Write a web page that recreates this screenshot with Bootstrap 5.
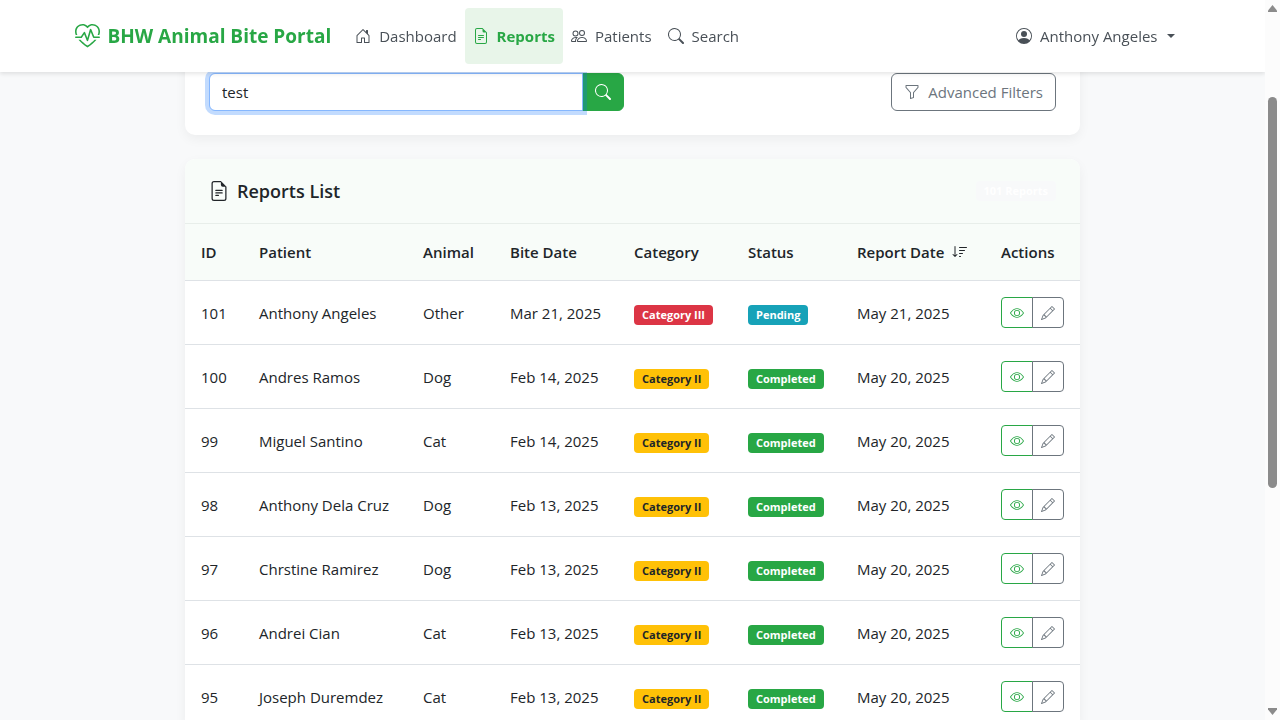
<!DOCTYPE html>
<html lang="en">
<head>
<meta charset="utf-8">
<meta name="viewport" content="width=device-width, initial-scale=1">
<title>Reports - BHW Animal Bite Portal</title>
<link href="https://cdn.jsdelivr.net/npm/bootstrap@5.3.0/dist/css/bootstrap.min.css" rel="stylesheet">
<style>
:root { --brand: #28a745; --gutter: 15px; }
body { font-family: "Open Sans", "Noto Sans", sans-serif; font-size: 15px; line-height: 24px; background: #f8f9fa; color: #212529; }
.ico { width: 16px; height: 16px; fill: currentColor; flex: none; }
.ico-brand { width: 25px; height: 25px; }
.ico-title { width: 20px; height: 20px; }
.ico-action { width: 14px; height: 14px; display: block; }
.viewport { height: 100vh; overflow: hidden; padding-right: var(--gutter); }
.topbar { right: var(--gutter); padding: 8px 0; background: #fff; box-shadow: 0 2px 4px rgba(0,0,0,.1); }
.brand-link { color: var(--brand) !important; font-size: 19px; font-weight: 700; line-height: 30px; margin-right: 16px; }
.topbar .nav-link { color: #495057; padding: 16px 8px; border-radius: 4px; display: flex; align-items: center; gap: 8px; }
.topbar .nav-link.active { color: var(--brand); background: #e8f5e9; font-weight: 700; }
.topbar .dropdown-toggle::after { margin-left: 1px; }
.page-col { max-width: 919px; padding: 49px 12px 0; }
.panel { border: 0; border-radius: 10px; box-shadow: 0 4px 12px rgba(0,0,0,.05); overflow: hidden; margin-bottom: 24px; }
.search-box { width: 415px; }
.search-box .form-control { height: 38px; font-size: 15px; border-color: #86b7fe; box-shadow: 0 0 0 4px rgba(13,110,253,.25); z-index: 5; }
.search-box .btn { background: var(--brand); color: #fff; border-color: var(--brand); }
.filter-btn { font-size: 15px; height: 38px; }
.panel-head { background: #f8fcf9; border-bottom: 1px solid #e8eeea; padding: 20px 24px; }
.panel-title { font-size: 18px; line-height: 24px; font-weight: 600; }
.count-badge { background: #f8f9fa; color: #fff; }
.badge { font-size: 11px; line-height: 12px; padding: 4px 8px; border-radius: 4px; }
.reports { table-layout: fixed; --bs-table-bg: transparent; }
.reports > :not(caption) > * > * { padding: 16px; white-space: nowrap; border-color: #dee2e6; }
.reports thead th { background: #f8fcf9; font-weight: 600; }
.c-id { width: 58px; } .c-patient { width: 164px; } .c-animal { width: 87px; } .c-bite { width: 124px; }
.c-cat { width: 114px; } .c-status { width: 109px; } .c-report { width: 144px; } .c-actions { width: 95px; }
.tag-red { background: #dc3545; } .tag-amber { background: #ffc107; color: #212529; }
.tag-teal { background: #17a2b8; } .tag-green { background: var(--brand); }
.btn-group-sm > .btn { padding: 8px; height: 31px; width: 32px; display: flex; justify-content: center; align-items: center; }
.btn-view { color: var(--brand); border-color: var(--brand); }
.scroll-rail { position: fixed; top: 0; right: 0; bottom: 0; width: var(--gutter); background: #fcfcfc; z-index: 1040; padding: 5px 3px; }
.scroll-thumb { width: 9px; border-radius: 5px; background: #8b8b8b; height: 55%; margin-top: 85px; }
.rail-arrow { width: 9px; height: 7px; fill: #8b8b8b; display: block; }
</style>
</head>
<body>
<svg class="d-none" aria-hidden="true">
<symbol id="pulse" viewBox="0 0 16 16"><path d="m8 2.748-.717-.737C5.6.281 2.514.878 1.4 3.053.918 3.995.78 5.323 1.508 7H.43c-2.128-5.697 4.165-8.83 7.394-5.857q.09.083.176.171a3 3 0 0 1 .176-.17c3.23-2.974 9.522.159 7.394 5.856h-1.078c.728-1.677.59-3.005.108-3.947C13.486.878 10.4.28 8.717 2.01zM2.212 10h1.315C4.593 11.183 6.05 12.458 8 13.795c1.949-1.337 3.407-2.612 4.473-3.795h1.315c-1.265 1.566-3.14 3.25-5.788 5-2.648-1.75-4.523-3.434-5.788-5"/><path d="M10.464 3.314a.5.5 0 0 0-.945.049L7.921 8.956 6.464 5.314a.5.5 0 0 0-.88-.091L3.732 8H.5a.5.5 0 0 0 0 1H4a.5.5 0 0 0 .416-.223l1.473-2.209 1.647 4.118a.5.5 0 0 0 .945-.049l1.598-5.593 1.457 3.642A.5.5 0 0 0 12 9h3.5a.5.5 0 0 0 0-1h-3.162z"/></symbol>
<symbol id="house" viewBox="0 0 16 16"><path d="M8.354 1.146a.5.5 0 0 0-.708 0l-6 6A.5.5 0 0 0 1.5 7.5v7a.5.5 0 0 0 .5.5h4.5a.5.5 0 0 0 .5-.5v-4h2v4a.5.5 0 0 0 .5.5H14a.5.5 0 0 0 .5-.5v-7a.5.5 0 0 0-.146-.354L13 5.793V2.5a.5.5 0 0 0-.5-.5h-1a.5.5 0 0 0-.5.5v1.293zM2.5 14V7.707l5.5-5.5 5.5 5.5V14H10v-4a.5.5 0 0 0-.5-.5h-3a.5.5 0 0 0-.5.5v4z"/></symbol>
<symbol id="file" viewBox="0 0 16 16"><path d="M5.5 7a.5.5 0 0 0 0 1h5a.5.5 0 0 0 0-1zM5 9.5a.5.5 0 0 1 .5-.5h5a.5.5 0 0 1 0 1h-5a.5.5 0 0 1-.5-.5m0 2a.5.5 0 0 1 .5-.5h2a.5.5 0 0 1 0 1h-2a.5.5 0 0 1-.5-.5"/><path d="M9.5 0H4a2 2 0 0 0-2 2v12a2 2 0 0 0 2 2h8a2 2 0 0 0 2-2V4.5zm0 1v2A1.5 1.5 0 0 0 11 4.5h2V14a1 1 0 0 1-1 1H4a1 1 0 0 1-1-1V2a1 1 0 0 1 1-1z"/></symbol>
<symbol id="people" viewBox="0 0 16 16"><path d="M15 14s1 0 1-1-1-4-5-4-5 3-5 4 1 1 1 1zm-7.978-1L7 12.996c.001-.264.167-1.03.76-1.72C8.312 10.629 9.282 10 11 10c1.717 0 2.687.63 3.24 1.276.593.69.758 1.457.76 1.72l-.008.002-.014.002zM11 7a2 2 0 1 0 0-4 2 2 0 0 0 0 4m3-2a3 3 0 1 1-6 0 3 3 0 0 1 6 0M6.936 9.28a6 6 0 0 0-1.23-.247A7 7 0 0 0 5 9c-4 0-5 3-5 4q0 1 1 1h4.216A2.24 2.24 0 0 1 5 13c0-1.01.377-2.042 1.09-2.904.243-.294.526-.569.846-.816M4.92 10A5.5 5.5 0 0 0 4 13H1c0-.26.164-1.03.76-1.724.545-.636 1.492-1.256 3.16-1.275ZM1.5 5.5a3 3 0 1 1 6 0 3 3 0 0 1-6 0m3-2a2 2 0 1 0 0 4 2 2 0 0 0 0-4"/></symbol>
<symbol id="search" viewBox="0 0 16 16"><path d="M11.742 10.344a6.5 6.5 0 1 0-1.397 1.398h-.001q.044.06.098.115l3.85 3.85a1 1 0 0 0 1.415-1.414l-3.85-3.85a1 1 0 0 0-.115-.1zM12 6.5a5.5 5.5 0 1 1-11 0 5.5 5.5 0 0 1 11 0"/></symbol>
<symbol id="person" viewBox="0 0 16 16"><path d="M11 6a3 3 0 1 1-6 0 3 3 0 0 1 6 0"/><path fill-rule="evenodd" d="M0 8a8 8 0 1 1 16 0A8 8 0 0 1 0 8m8-7a7 7 0 0 0-5.468 11.37C3.242 11.226 4.805 10 8 10s4.757 1.225 5.468 2.37A7 7 0 0 0 8 1"/></symbol>
<symbol id="funnel" viewBox="0 0 16 16"><path d="M1.5 1.5A.5.5 0 0 1 2 1h12a.5.5 0 0 1 .5.5v2a.5.5 0 0 1-.128.334L10 8.692V13.5a.5.5 0 0 1-.342.474l-3 1A.5.5 0 0 1 6 14.5V8.692L1.628 3.834A.5.5 0 0 1 1.5 3.5zm1 .5v1.308l4.372 4.858A.5.5 0 0 1 7 8.5v5.306l2-.666V8.5a.5.5 0 0 1 .128-.334L13.5 3.308V2z"/></symbol>
<symbol id="sort" viewBox="0 0 16 16"><path d="M3.5 2.5a.5.5 0 0 0-1 0v8.793l-1.146-1.147a.5.5 0 0 0-.708.708l2 1.999.007.007a.497.497 0 0 0 .7-.006l2-2a.5.5 0 0 0-.707-.708L3.5 11.293zm3.5 1a.5.5 0 0 1 .5-.5h7a.5.5 0 0 1 0 1h-7a.5.5 0 0 1-.5-.5M7.500 6a.5.5 0 0 0 0 1h5a.5.5 0 0 0 0-1zm0 3a.5.5 0 0 0 0 1h3a.5.5 0 0 0 0-1zm0 3a.5.5 0 0 0 0 1h1a.5.5 0 0 0 0-1z"/></symbol>
<symbol id="eye" viewBox="0 0 16 16"><path d="M16 8s-3-5.500-8-5.500S0 8 0 8s3 5.500 8 5.500S16 8 16 8M1.173 8a13 13 0 0 1 1.660-2.043C4.120 4.668 5.880 3.500 8 3.500s3.879 1.168 5.168 2.457A13 13 0 0 1 14.828 8q-.086.130-.195.288c-.335.480-.830 1.120-1.465 1.755C11.879 11.332 10.119 12.500 8 12.500s-3.879-1.168-5.168-2.457A13 13 0 0 1 1.172 8z"/><path d="M8 5.500a2.500 2.500 0 1 0 0 5 2.500 2.500 0 0 0 0-5M4.500 8a3.500 3.500 0 1 1 7 0 3.500 3.500 0 0 1-7 0"/></symbol>
<symbol id="pencil" viewBox="0 0 16 16"><path d="M12.146.146a.5.5 0 0 1 .708 0l3 3a.5.5 0 0 1 0 .708l-10 10a.5.5 0 0 1-.168.110l-5 2a.5.5 0 0 1-.650-.650l2-5a.5.5 0 0 1 .110-.168zM11.207 2.500 13.500 4.793 14.793 3.500 12.500 1.207zm1.586 3L10.500 3.207 4 9.707V10h.5a.5.5 0 0 1 .5.5v.5h.5a.5.5 0 0 1 .5.5v.5h.293zm-9.761 5.175-.106.106-1.528 3.821 3.821-1.528.106-.106A.5.5 0 0 1 5 12.500V12h-.5a.5.5 0 0 1-.5-.5V11h-.5a.5.5 0 0 1-.468-.325"/></symbol>
</svg>

<nav class="navbar navbar-expand-lg fixed-top topbar" aria-label="Main">
  <div class="container">
    <a class="navbar-brand brand-link d-flex align-items-center gap-2 py-0" href="#"><svg class="ico ico-brand"><use href="#pulse"/></svg>BHW Animal Bite Portal</a>
    <ul class="navbar-nav me-auto">
      <li class="nav-item"><a class="nav-link" href="#"><svg class="ico"><use href="#house"/></svg>Dashboard</a></li>
      <li class="nav-item"><a class="nav-link active" aria-current="page" href="#"><svg class="ico"><use href="#file"/></svg>Reports</a></li>
      <li class="nav-item"><a class="nav-link" href="#"><svg class="ico"><use href="#people"/></svg>Patients</a></li>
      <li class="nav-item"><a class="nav-link" href="#"><svg class="ico"><use href="#search"/></svg>Search</a></li>
    </ul>
    <ul class="navbar-nav me-2">
      <li class="nav-item dropdown"><a class="nav-link dropdown-toggle" href="#" role="button" data-bs-toggle="dropdown"><svg class="ico"><use href="#person"/></svg>Anthony Angeles</a></li>
    </ul>
  </div>
</nav>

<div class="viewport">
  <main class="container page-col">
    <section class="card panel">
      <form class="d-flex justify-content-between p-4">
        <div class="input-group search-box">
          <input type="text" class="form-control" value="test" aria-label="Search reports">
          <button type="button" class="btn d-flex align-items-center" aria-label="Search"><svg class="ico"><use href="#search"/></svg></button>
        </div>
        <button type="button" class="btn btn-outline-secondary filter-btn d-flex align-items-center gap-2"><svg class="ico"><use href="#funnel"/></svg>Advanced Filters</button>
      </form>
    </section>

    <section class="card panel">
      <div class="panel-head d-flex justify-content-between align-items-center">
        <h1 class="panel-title d-flex align-items-center gap-2 mb-0"><svg class="ico ico-title"><use href="#file"/></svg>Reports List</h1>
        <span class="badge count-badge">101 Reports</span>
      </div>
      <table class="table reports align-middle mb-0">
        <thead>
          <tr><th class="c-id">ID</th><th class="c-patient">Patient</th><th class="c-animal">Animal</th><th class="c-bite">Bite Date</th><th class="c-cat">Category</th><th class="c-status">Status</th><th class="c-report"><span class="d-flex align-items-center gap-2">Report Date<svg class="ico"><use href="#sort"/></svg></span></th><th class="c-actions">Actions</th></tr>
        </thead>
        <tbody id="rows"></tbody>
      </table>
    </section>
  </main>
</div>

<div class="scroll-rail d-flex flex-column" aria-hidden="true">
  <svg class="rail-arrow" viewBox="0 0 9 7"><path d="M4.500 0 9 5.500V7H0V5.500z"/></svg>
  <div class="scroll-thumb"></div>
  <svg class="rail-arrow mt-auto" viewBox="0 0 9 7"><path d="M0 0h9v1.500L4.500 7 0 1.500z"/></svg>
</div>

<script src="https://cdn.jsdelivr.net/npm/bootstrap@5.3.0/dist/js/bootstrap.bundle.min.js"></script>
<script>
const reports = [
  [101, "Anthony Angeles", "Other", "Mar 21, 2025", "III", "Pending", "May 21, 2025"],
  [100, "Andres Ramos", "Dog", "Feb 14, 2025", "II", "Completed", "May 20, 2025"],
  [99, "Miguel Santino", "Cat", "Feb 14, 2025", "II", "Completed", "May 20, 2025"],
  [98, "Anthony Dela Cruz", "Dog", "Feb 13, 2025", "II", "Completed", "May 20, 2025"],
  [97, "Chrstine Ramirez", "Dog", "Feb 13, 2025", "II", "Completed", "May 20, 2025"],
  [96, "Andrei Cian", "Cat", "Feb 13, 2025", "II", "Completed", "May 20, 2025"],
  [95, "Joseph Duremdez", "Cat", "Feb 13, 2025", "II", "Completed", "May 20, 2025"]
];
document.getElementById("rows").innerHTML = reports.map(([id, patient, animal, bite, cat, status, date]) => `
  <tr><td>${id}</td><td>${patient}</td><td>${animal}</td><td>${bite}</td>
  <td><span class="badge ${cat === "III" ? "tag-red" : "tag-amber"}">Category ${cat}</span></td>
  <td><span class="badge ${status === "Pending" ? "tag-teal" : "tag-green"}">${status}</span></td>
  <td>${date}</td>
  <td><div class="btn-group btn-group-sm d-flex">
    <button type="button" class="btn btn-view flex-grow-0" aria-label="View report ${id}"><svg class="ico ico-action"><use href="#eye"/></svg></button>
    <button type="button" class="btn btn-outline-secondary flex-grow-0" aria-label="Edit report ${id}"><svg class="ico ico-action"><use href="#pencil"/></svg></button>
  </div></td></tr>`).join("");
</script>
</body>
</html>
